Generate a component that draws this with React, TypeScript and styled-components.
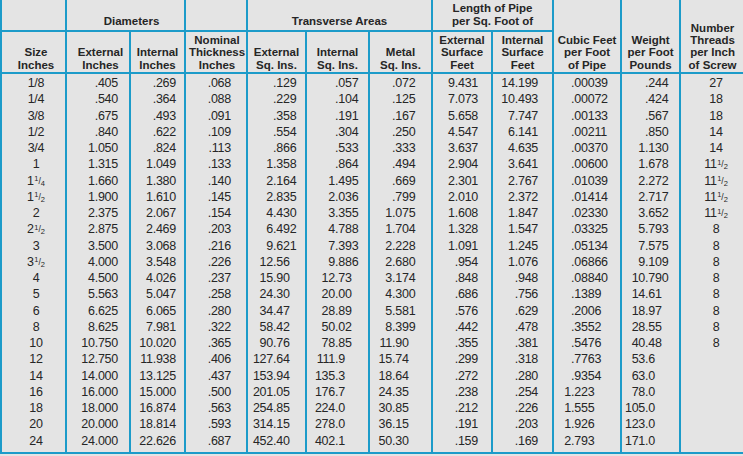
import React from "react";
import styled, { createGlobalStyle } from "styled-components";

const BLUE = "#1c9bc9";

const GlobalStyle = createGlobalStyle`
  html, body {
    margin: 0;
    padding: 0;
    background: #e4e4e4;
  }
  body {
    font-family: "Liberation Sans", Arial, sans-serif;
    overflow: hidden;
  }
`;

const Table = styled.table`
  width: 743px;
  table-layout: fixed;
  border-collapse: collapse;
  background: #e4e4e4;
  color: #262626;
  border-bottom: 2px solid ${BLUE};
`;

const HeadRow = styled.tr<{ $h: number }>`
  height: ${(p) => p.$h}px;
`;

const HeadCell = styled.th<{ $shift?: number; $pb?: number }>`
  font-size: 11.5px;
  font-weight: bold;
  line-height: 12.3px;
  text-align: center;
  vertical-align: bottom;
  padding: 0 0 ${(p) => p.$pb ?? 1}px ${(p) => p.$shift ?? 0}px;
  border-left: 2px solid ${BLUE};
  border-bottom: 2px solid ${BLUE};
  white-space: nowrap;
`;

const DataRow = styled.tr`
  height: 16.25px;
  &:first-child > td {
    padding-top: 1px;
  }
  &:last-child > td {
    padding-bottom: 3px;
  }
`;

type Align = "center" | "right" | "dec";

const DataCell = styled.td<{ $align: Align; $pad: number }>`
  font-size: 12.5px;
  letter-spacing: -0.25px;
  line-height: 16.25px;
  vertical-align: top;
  white-space: nowrap;
  border-left: 2px solid ${BLUE};
  text-align: ${(p) => (p.$align === "dec" ? "left" : p.$align)};
  padding: 0;
  padding-left: ${(p) => (p.$align === "center" ? p.$pad : 0)}px;
  padding-right: ${(p) => (p.$align === "right" ? p.$pad : 0)}px;
`;

const IntPart = styled.span<{ $w: number }>`
  display: inline-block;
  width: ${(p) => p.$w}px;
  text-align: right;
`;

const Sup = styled.span`
  font-size: 7.5px;
  letter-spacing: 0;
  line-height: 0;
  vertical-align: 3.5px;
  margin-left: 0.5px;
`;

const Slash = styled.span`
  font-size: 8.5px;
  letter-spacing: 0;
  line-height: 0;
  vertical-align: 1px;
`;

const Sub = styled.span`
  font-size: 7.5px;
  letter-spacing: 0;
  line-height: 0;
  vertical-align: -0.5px;
`;

type Column = { align: Align; pad: number; width: number };

const columns: Column[] = [
  { align: "center", pad: 5, width: 65 },
  { align: "right", pad: 11, width: 64 },
  { align: "right", pad: 8, width: 55 },
  { align: "right", pad: 15, width: 62 },
  { align: "dec", pad: 25, width: 59 },
  { align: "dec", pad: 28, width: 63 },
  { align: "dec", pad: 22, width: 63 },
  { align: "right", pad: 13, width: 60 },
  { align: "right", pad: 14, width: 61 },
  { align: "dec", pad: 17, width: 68 },
  { align: "dec", pad: 23, width: 59 },
  { align: "center", pad: 7, width: 64 },
];

const rows: string[][] = [
  ["1/8", ".405", ".269", ".068", ".129", ".057", ".072", "9.431", "14.199", ".00039", ".244", "27"],
  ["1/4", ".540", ".364", ".088", ".229", ".104", ".125", "7.073", "10.493", ".00072", ".424", "18"],
  ["3/8", ".675", ".493", ".091", ".358", ".191", ".167", "5.658", "7.747", ".00133", ".567", "18"],
  ["1/2", ".840", ".622", ".109", ".554", ".304", ".250", "4.547", "6.141", ".00211", ".850", "14"],
  ["3/4", "1.050", ".824", ".113", ".866", ".533", ".333", "3.637", "4.635", ".00370", "1.130", "14"],
  ["1", "1.315", "1.049", ".133", "1.358", ".864", ".494", "2.904", "3.641", ".00600", "1.678", "11-1/2"],
  ["1-1/4", "1.660", "1.380", ".140", "2.164", "1.495", ".669", "2.301", "2.767", ".01039", "2.272", "11-1/2"],
  ["1-1/2", "1.900", "1.610", ".145", "2.835", "2.036", ".799", "2.010", "2.372", ".01414", "2.717", "11-1/2"],
  ["2", "2.375", "2.067", ".154", "4.430", "3.355", "1.075", "1.608", "1.847", ".02330", "3.652", "11-1/2"],
  ["2-1/2", "2.875", "2.469", ".203", "6.492", "4.788", "1.704", "1.328", "1.547", ".03325", "5.793", "8"],
  ["3", "3.500", "3.068", ".216", "9.621", "7.393", "2.228", "1.091", "1.245", ".05134", "7.575", "8"],
  ["3-1/2", "4.000", "3.548", ".226", "12.56", "9.886", "2.680", ".954", "1.076", ".06866", "9.109", "8"],
  ["4", "4.500", "4.026", ".237", "15.90", "12.73", "3.174", ".848", ".948", ".08840", "10.790", "8"],
  ["5", "5.563", "5.047", ".258", "24.30", "20.00", "4.300", ".686", ".756", ".1389", "14.61", "8"],
  ["6", "6.625", "6.065", ".280", "34.47", "28.89", "5.581", ".576", ".629", ".2006", "18.97", "8"],
  ["8", "8.625", "7.981", ".322", "58.42", "50.02", "8.399", ".442", ".478", ".3552", "28.55", "8"],
  ["10", "10.750", "10.020", ".365", "90.76", "78.85", "11.90", ".355", ".381", ".5476", "40.48", "8"],
  ["12", "12.750", "11.938", ".406", "127.64", "111.9", "15.74", ".299", ".318", ".7763", "53.6", ""],
  ["14", "14.000", "13.125", ".437", "153.94", "135.3", "18.64", ".272", ".280", ".9354", "63.0", ""],
  ["16", "16.000", "15.000", ".500", "201.05", "176.7", "24.35", ".238", ".254", "1.223", "78.0", ""],
  ["18", "18.000", "16.874", ".563", "254.85", "224.0", "30.85", ".212", ".226", "1.555", "105.0", ""],
  ["20", "20.000", "18.814", ".593", "314.15", "278.0", "36.15", ".191", ".203", "1.926", "123.0", ""],
  ["24", "24.000", "22.626", ".687", "452.40", "402.1", "50.30", ".159", ".169", "2.793", "171.0", ""],
];

// "1-1/4" -> 1 with a small 1/4 beside it
const Mixed = ({ value }: { value: string }) => {
  const [whole, frac] = value.split("-");
  const [num, den] = frac.split("/");
  return (
    <>
      {whole}
      <Sup>{num}</Sup>
      <Slash>/</Slash>
      <Sub>{den}</Sub>
    </>
  );
};

const Value = ({ value, col }: { value: string; col: Column }) => {
  if (value.includes("-")) return <Mixed value={value} />;
  if (col.align !== "dec") return <>{value}</>;
  const dot = value.indexOf(".");
  return (
    <>
      <IntPart $w={col.pad}>{value.slice(0, dot)}</IntPart>
      {value.slice(dot)}
    </>
  );
};

const App = () => (
  <>
    <GlobalStyle />
    <Table>
      <colgroup>
        {columns.map((c, i) => (
          <col key={i} style={{ width: c.width }} />
        ))}
      </colgroup>
      <thead>
        <HeadRow $h={31}>
          <HeadCell />
          <HeadCell colSpan={2} $shift={12} $pb={3}>
            Diameters
          </HeadCell>
          <HeadCell />
          <HeadCell colSpan={3} $pb={3}>
            Transverse Areas
          </HeadCell>
          <HeadCell colSpan={2} $pb={3}>
            Length of Pipe
            <br />
            per Sq. Foot of
          </HeadCell>
          <HeadCell rowSpan={2}>
            Cubic Feet
            <br />
            per Foot
            <br />
            of Pipe
          </HeadCell>
          <HeadCell rowSpan={2}>
            Weight
            <br />
            per Foot
            <br />
            Pounds
          </HeadCell>
          <HeadCell rowSpan={2}>
            Number
            <br />
            Threads
            <br />
            per Inch
            <br />
            of Screw
          </HeadCell>
        </HeadRow>
        <HeadRow $h={42}>
          <HeadCell $shift={5}>
            Size
            <br />
            Inches
          </HeadCell>
          <HeadCell $shift={5}>
            External
            <br />
            Inches
          </HeadCell>
          <HeadCell>
            Internal
            <br />
            Inches
          </HeadCell>
          <HeadCell $shift={2}>
            Nominal
            <br />
            Thickness
            <br />
            Inches
          </HeadCell>
          <HeadCell>
            External
            <br />
            Sq. Ins.
          </HeadCell>
          <HeadCell>
            Internal
            <br />
            Sq. Ins.
          </HeadCell>
          <HeadCell>
            Metal
            <br />
            Sq. Ins.
          </HeadCell>
          <HeadCell>
            External
            <br />
            Surface
            <br />
            Feet
          </HeadCell>
          <HeadCell>
            Internal
            <br />
            Surface
            <br />
            Feet
          </HeadCell>
        </HeadRow>
      </thead>
      <tbody>
        {rows.map((row) => (
          <DataRow key={row[0]}>
            {row.map((v, i) => (
              <DataCell key={i} $align={columns[i].align} $pad={columns[i].pad}>
                <Value value={v} col={columns[i]} />
              </DataCell>
            ))}
          </DataRow>
        ))}
      </tbody>
    </Table>
  </>
);

export default App;
